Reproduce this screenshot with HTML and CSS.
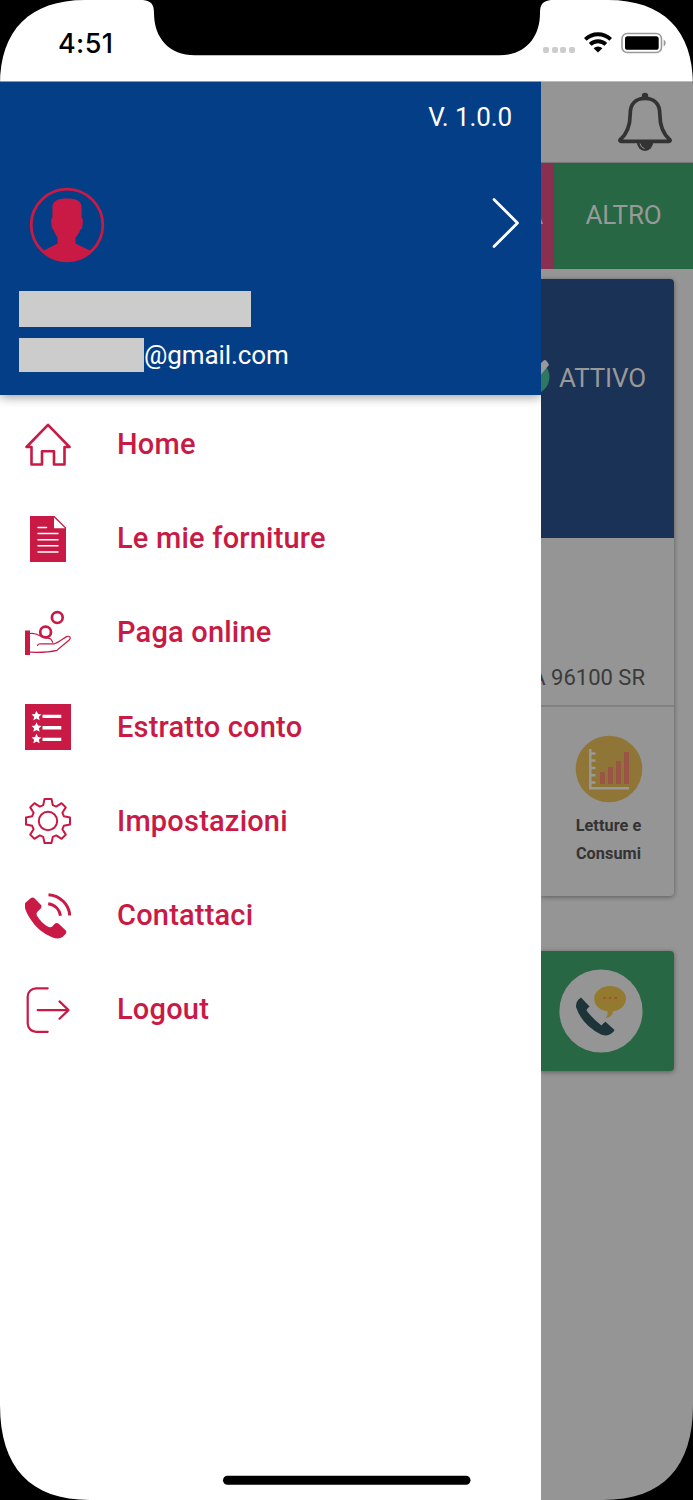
FILE: index.html
```html
<!DOCTYPE html>
<html lang="it">
<head>
<meta charset="utf-8">
<title>Menu</title>
<link rel="stylesheet" href="styles.css">
</head>
<body>
<div class="phone">
  <header class="status">
    <span class="clock">4:51</span>
    <div class="signals">
      <div class="dots"><i></i><i></i><i></i><i></i></div>
      <svg class="wifi" viewBox="0 0 28 21" width="28" height="21"><g fill="none" stroke="#000" stroke-width="3.9"><path d="M1.3 7.4a18.2 18.2 0 0 1 25.4 0"/><path d="M6.2 12.4a11.2 11.2 0 0 1 15.6 0"/></g><path d="M9.6 16.2a6.4 6.4 0 0 1 8.8 0L14 20.5z"/></svg>
      <svg class="battery" viewBox="0 0 46 22" width="46" height="22"><rect x="1" y="1.5" width="39.5" height="19" rx="5.2" fill="none" stroke="#999" stroke-width="1.6"/><rect x="4" y="4.2" width="33.7" height="13.6" rx="2.6"/><path d="M42.7 7.5q2 1 2 3.500t-2 3.500z" fill="#999"/></svg>
    </div>
  </header>
  <div class="content">
    <aside class="drawer">
      <div class="profile">
        <div class="version">V. 1.0.0</div>
        <div class="identity">
          <svg viewBox="0 0 76 76" width="76" height="76"><circle cx="38" cy="38" r="35.800" fill="none" stroke="#c91a45" stroke-width="2.800"/><path d="M23.400 20C23.400 14 29 11.500 38 11.500S52.600 14 52.600 20V31C54.300 31 53.900 34 53.500 38C53.200 41.500 52.500 42.500 51.300 42.800C50 46.500 48.500 48.800 46.500 50.500V56.500L62 64A36 36 0 0 1 14 64L28.500 56.500V50.500C26.500 48 25.500 45.500 24.700 42.800C23.500 42.500 22.800 41 22.500 38C22.100 34 21.700 31 23.400 31Z" fill="#c91a45"/></svg>
          <svg viewBox="0 0 30 52" width="30" height="52"><path d="M3 2.500L26.500 26L3 49.500" fill="none" stroke="#fff" stroke-width="2.700" stroke-linecap="round" stroke-linejoin="round"/></svg>
        </div>
        <div class="name-block"></div>
        <div class="mail"><span class="mail-block"></span><span>@gmail.com</span></div>
      </div>
      <nav class="menu">
        <a class="item"><svg class="icon" viewBox="0 0 46 46"><path d="M23 2.800L44.500 25H39.500V42.500H29V29.200H17V42.500H6.500V25H1.500L23 2.800Z" fill="none" stroke="#c91a45" stroke-width="2.600" stroke-linejoin="round"/></svg><span>Home</span></a>
        <a class="item"><svg class="icon" viewBox="0 0 46 46"><path d="M5 0H29.500L41 11.500V46H5Z" fill="#c91a45"/><path d="M29 1.500V12.300H40Z" fill="#fff"/><path d="M13 11.500H21.500M13 17.600H33M13 23.700H33M13 29.800H33M13 36H33" stroke="#fff" stroke-width="1.500" stroke-linecap="round"/></svg><span>Le mie forniture</span></a>
        <a class="item"><svg class="icon" viewBox="0 0 46 46"><g fill="none" stroke="#c91a45"><circle cx="32.300" cy="7.600" r="5.400" stroke-width="2.700"/><circle cx="20.600" cy="22" r="5.400" stroke-width="2.700"/><path d="M5 23.500C9 22.800 12 24 15 25.800C18 28.500 23 27.300 25.800 29L28 32.800M12.500 36C12.500 33.500 15 33.800 18 33.800H29.500C35 32 38 28.500 41.500 26.600C44.500 25.500 46.500 27.500 44.200 30L32 40.300C23 42.500 17 42.600 5 42.200" stroke-width="1.200"/></g><path d="M0 20.500H5V45H0Z" fill="#c91a45"/></svg><span>Paga online</span></a>
        <a class="item"><svg class="icon" viewBox="0 0 46 46"><path fill="#c91a45" d="M0 0H46V46H0Z"/><g fill="#fff"><path d="M17.500 10.800H36.300V14.100H17.500ZM17.500 22.100H36.300V25.400H17.500ZM17.500 33.700H36.300V37H17.500Z"/><path id="star" d="M11.500 6.700L13 10L16.400 10.400L13.900 12.700L14.600 16.200L11.500 14.500L8.400 16.200L9.100 12.700L6.600 10.400L10 10Z"/><use href="#star" y="11.500"/><use href="#star" y="23"/></g></svg><span>Estratto conto</span></a>
        <a class="item"><svg class="icon" viewBox="0 0 46 46"><g fill="none" stroke="#c91a45" stroke-width="2" stroke-linejoin="round"><circle cx="23" cy="23" r="9.200"/><path d="M19.500 1H26.500L27.800 7.200L31.200 8.600L36.600 5.200L40.800 9.400L37.400 14.800L38.800 18.200L45 19.500V26.500L38.800 27.800L37.400 31.200L40.800 36.600L36.600 40.800L31.200 37.400L27.800 38.800L26.500 45H19.500L18.200 38.800L14.800 37.400L9.400 40.800L5.200 36.600L8.600 31.200L7.200 27.800L1 26.500V19.500L7.200 18.200L8.600 14.800L5.200 9.400L9.400 5.200L14.800 8.600L18.200 7.200Z"/></g></svg><span>Impostazioni</span></a>
        <a class="item"><svg class="icon" viewBox="0 0 46 46"><path d="M5.300 5.500Q7.800 3.600 10 5.700L16 12Q17.300 14 15.500 15.700L12.200 19Q11 20.500 12 22.800Q16.500 30.500 23.500 34Q26 35 27.500 33.300L29.500 31Q31.500 29 33.700 30.800L40.300 37Q42.300 39 40.500 41L37.500 44Q34 46.700 27 44.200Q13 38.500 5 25.500Q-3 12.500 1 9.200Z" fill="#c91a45"/><path d="M23.500 1.700C35 2.500 44.200 11.500 44.700 22.500M23.200 10.700C30 11.700 34.500 16.500 35.500 22.800" fill="none" stroke="#c91a45" stroke-width="3"/></svg><span>Contattaci</span></a>
        <a class="item"><svg class="icon" viewBox="0 0 46 46"><path d="M22.700 1.300H11A8.300 8.300 0 0 0 2.700 9.600V36.500A8.300 8.300 0 0 0 11 44.800H22.700M12.700 23.100H43.500M34.500 14.400L43.500 23.100L34.500 31.700" fill="none" stroke="#c91a45" stroke-width="2.200" stroke-linecap="round" stroke-linejoin="round"/></svg><span>Logout</span></a>
      </nav>
    </aside>
    <main class="page">
      <div class="topbar"><svg viewBox="0 0 56 60" width="56" height="60"><circle cx="28" cy="4" r="3.200" fill="#333"/><path d="M3 48C10 42 13.200 33 13.200 22C13.200 12 19 6.300 28 6.300S42.800 12 42.800 22C42.800 33 46 42 53 48Q53.500 49.300 52 49.300H4Q2.500 49.300 3 48Z" fill="none" stroke="#333" stroke-width="3.700"/><path d="M19.800 50H36.200A8.200 9 0 0 1 19.800 50Z" fill="#333"/><path d="M23 51.500Q23.500 55.500 27.500 56.500" fill="none" stroke="#959595"/></svg></div>
      <div class="tabs"><div class="tab-pink">ATTIVA</div><div class="tab-green">ALTRO</div></div>
      <section class="card">
        <div class="state"><svg viewBox="0 0 42 42" width="42" height="42"><circle cx="24" cy="20" r="17.500" fill="#2f7663"/><path d="M20 21L35.500 3.500Q38 1.500 41 8L26 26Z" fill="#999"/></svg><span>ATTIVO</span></div>
        <div class="address">SIRACUSA 96100 SR</div>
        <div class="reading"><svg viewBox="0 0 68 68" width="68" height="68"><circle cx="34" cy="34" r="33.300" fill="#8f7637"/><path d="M15.300 14V53.300H54M15 18.500H20.500M15 25.500H20.500M15 33H20.500M15 40.200H20.500M15 47.500H20.500" fill="none" stroke="#999" stroke-width="2.500"/><path d="M25 37H30V49H25ZM33 32H38V49H33ZM41 26H46V49H41ZM49 17H54V49H49Z" fill="#9a5546"/></svg><div class="caption">Letture e<br>Consumi</div></div>
      </section>
      <section class="contact"><svg viewBox="0 0 84 84" width="84" height="84"><circle cx="42" cy="42" r="41.600" fill="#959595"/><path d="M22 28.500L30.500 37.500Q28 39.500 27.500 41.500Q33 49 42.500 56.500Q44.500 54 46.500 52.800L55.500 61Q55 63 51.500 65Q48.500 67.500 42 65.500Q23 56 17 38Q16.500 32 22 28.500Z" fill="#1d3439"/><path d="M51 17C59.500 17 67 22.500 67 29.500C67 36.500 61 41.500 54 42.200C53.500 46.500 50.500 49 46.500 49C48.500 47 48.800 45 48.600 42.200C41 41.500 35.200 36.500 35.200 29.500C35.200 22.500 42.500 17 51 17Z" fill="#937a2e"/><path d="M44.400 29H46.600M50 29H52.200M55.600 29H57.800" stroke="#a64c38" stroke-width="2.200"/></svg></section>
    </main>
  </div>
  <svg class="bezel" viewBox="0 0 693 1500"><path d="M0 0H85C30 0 0 30 0 85ZM693 0H608C663 0 693 30 693 85ZM0 1500H90C30 1500 0 1467 0 1405ZM693 1500H603C663 1500 693 1467 693 1405ZM143 0C151 1 154 4 154 13C154 38 169 55.300 195 55.300H499C525 55.300 540 38 540 13C540 4 543 1 551 0Z"/><rect x="223" y="1475.700" width="247.500" height="9" rx="4.500"/></svg>
</div>
</body>
</html>
```
FILE: styles.css
```css
* { box-sizing: border-box; }
body { margin: 0; font-family: Roboto, sans-serif; }
svg { display: block; flex: none; }
.phone { position: relative; width: 693px; height: 1500px; overflow: hidden; background: #fff; display: flex; flex-direction: column; }
.bezel { position: absolute; inset: 0; width: 693px; height: 1500px; }
.status { height: 81px; flex: none; display: flex; justify-content: space-between; padding: 26px 26px 0 58px; }
.clock { font: 500 27px/36px Inter, sans-serif; letter-spacing: .4px; }
.signals { display: flex; height: 34px; align-items: center; }
.dots { display: flex; gap: 2.700px; margin: 13px 9px 0 0; }
.dots i { width: 6px; height: 6px; border-radius: 2px; background: #ccc; }
.battery { margin-left: 9px; }
.wifi { margin-top: -2px; }
.content { flex: 1; display: grid; grid-template-columns: 541px 152px; }
.drawer { background: #fff; }
.profile { height: 314px; background: #043e86; color: #fff; border-top: 1px solid #7d9cc0; padding: 20px 0 0 19px; box-shadow: 0 2px 10px rgba(0, 0, 0, .4); clip-path: inset(0 0 -20px 0); font-size: 26px; line-height: 30px; letter-spacing: -.1px; }
.version { text-align: right; padding-right: 29px; }
.identity { display: flex; justify-content: space-between; align-items: center; margin: 54px 20px 0 10px; height: 77px; }
.identity svg:last-child { margin-top: -4px; }
.name-block { width: 232px; height: 36px; background: #ccc; margin-top: 28px; }
.mail { display: flex; align-items: center; margin-top: 11px; height: 34px; }
.mail-block { width: 125px; height: 34px; background: #ccc; }
.menu { padding-top: 2.500px; }
.item { display: flex; align-items: center; height: 94.200px; padding-left: 25px; gap: 46px; color: #c91a45; font-size: 29px; font-weight: 500; letter-spacing: .2px; }
.item span { margin-top: -1px; }
.icon { width: 46px; height: 46px; }
.page { background: #959595; overflow: hidden; color: #999; font-size: 26px; letter-spacing: -.15px; border-top: 1px solid #bbb; }
.topbar { height: 80px; padding: 10px 0 0 76px; }
.tabs { height: 107px; display: flex; justify-content: flex-end; line-height: 105px; border-top: 1px solid #787878; }
.tab-pink { background: #8b2f50; padding-right: 11px; flex: none; }
.tab-green { width: 139px; flex: none; background: #276743; text-align: center; }
.card { width: 133px; height: 617px; margin-top: 10px; border-radius: 0 4px 4px 0; box-shadow: 0 1px 5px rgba(0, 0, 0, .4); }
.state { height: 259px; background: #193255; border-radius: 0 4px 0 0; display: flex; align-items: center; justify-content: flex-end; padding: 0 28px 61px 0; gap: 9px; }
.address { height: 169px; color: #3b3b3b; font-size: 22px; letter-spacing: 0; line-height: 26px; padding: 127px 29px 0 0; display: flex; justify-content: flex-end; white-space: nowrap; border-bottom: 2px solid #818181; }
.reading { display: flex; flex-direction: column; align-items: center; padding: 28px 0 0 2px; }
.caption { color: #333; font-size: 16.300px; letter-spacing: .05px; font-weight: 700; line-height: 27.700px; text-align: center; padding-top: 9px; }
.contact { width: 133px; height: 120px; background: #276743; margin-top: 55px; border-radius: 0 4px 4px 0; padding: 18px 0 0 18px; box-shadow: 0 1px 5px rgba(0, 0, 0, .4); }
```
